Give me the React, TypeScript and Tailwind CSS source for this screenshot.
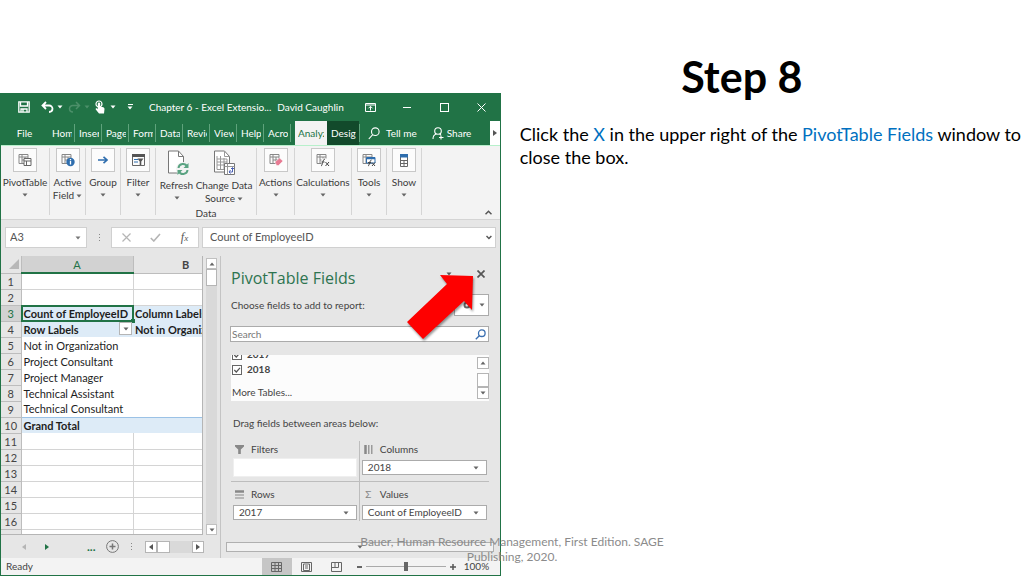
import type { ReactNode } from "react";

const tabs = ["Home", "Insert", "Page", "Formulas", "Data", "Review", "View", "Help", "Acrobat"];

const sheetRows = [
  { a: "", b: "" },
  { a: "", b: "" },
  { a: "Count of EmployeeID", b: "Column Labels", kind: "head" },
  { a: "Row Labels", b: "Not in Organization", kind: "head" },
  { a: "Not in Organization", b: "", kind: "body" },
  { a: "Project Consultant", b: "", kind: "body" },
  { a: "Project Manager", b: "", kind: "body" },
  { a: "Technical Assistant", b: "", kind: "body" },
  { a: "Technical Consultant", b: "", kind: "body" },
  { a: "Grand Total", b: "", kind: "head" },
  { a: "", b: "" },
  { a: "", b: "" },
  { a: "", b: "" },
  { a: "", b: "" },
  { a: "", b: "" },
  { a: "", b: "" },
  { a: "", b: "" },
];

function Caret({ className = "", up = false }: { className?: string; up?: boolean }) {
  return (
    <svg viewBox="0 0 6 4" className={`w-[6px] h-[4px] shrink-0 ${className}`} fill="currentColor">
      <path d={up ? "M.5 3.500h5L3 .5z" : "M.5.5h5L3 3.500z"} />
    </svg>
  );
}

function SideCaret({ left = false }: { left?: boolean }) {
  return (
    <svg viewBox="0 0 4 6" className="w-[4px] h-[6px]" fill="currentColor">
      <path d={left ? "M4 0v6L0 3z" : "M0 0v6l4-3z"} />
    </svg>
  );
}

/* Small pivot grid used by most ribbon icons */
function GridIcon({ children }: { children?: ReactNode }) {
  return (
    <svg viewBox="0 0 14 14" className="w-[14px] h-[14px]" fill="none">
      <path d="M1 1.500h9v9H1zM1 4h9M4 1.500v9M7 4v6.500M4 7h6" stroke="#888" strokeWidth="1" />
      {children}
    </svg>
  );
}

function RibbonGroup({ label, width, icon, second }: { label: string; width: string; icon: ReactNode; second?: string }) {
  return (
    <div className={`${width} shrink-0 h-[67px] border-r border-[#d5d5d5]`}>
      <button className="w-full flex flex-col items-center whitespace-nowrap text-[#3b3b3b]">
        <span className="w-[24px] h-[24px] bg-[#fcfcfc] border border-[#c8c8c8] flex items-center justify-center">
          {icon}
        </span>
        <span className="leading-[13px] mt-[4px]">{label}</span>
        {second ? (
          <span className="leading-[13px] flex items-center gap-[2px]">
            {second}
            <Caret className="text-[#666]" />
          </span>
        ) : (
          <Caret className="mt-[4px] text-[#666]" />
        )}
      </button>
    </div>
  );
}

function TitleBar() {
  return (
    <div className="h-[28px] flex items-center">
      <div className="flex items-center gap-[5px] pl-[17px]">
        <button aria-label="Save">
          <svg viewBox="0 0 12 12" className="w-[12px] h-[12px]" fill="none" stroke="#fff" strokeWidth="1.3">
            <path d="M.8.8h10.400v10.400H.8zM2.500.8v4.200h7V.8M3 11V8h6v3M5 8.500V11" />
          </svg>
        </button>
        <button aria-label="Undo" className="flex items-center gap-[3px] ml-[6px]">
          <svg viewBox="0 0 13 12" className="w-[13px] h-[12px]" fill="none" stroke="#fff" strokeWidth="1.8">
            <path d="M5 1L1.500 4.500 5 8M1.500 4.500H8a3.300 3.300 0 013.500 3.300c0 2-1.500 3.200-3.500 3.200" />
          </svg>
          <Caret />
        </button>
        <button aria-label="Redo" className="flex items-center gap-[3px] text-[#4c8f69]">
          <svg viewBox="0 0 13 12" className="w-[13px] h-[12px]" fill="none" stroke="currentColor" strokeWidth="1.5">
            <path d="M8 1l3.500 3.500L8 8M11.500 4.500H5A3.300 3.300 0 001.500 7.800C1.500 9.800 3 11 5 11" />
          </svg>
          <Caret />
        </button>
        <button aria-label="Touch mode" className="flex items-center gap-[5px]">
          <svg viewBox="0 0 10 14" className="w-[10px] h-[14px]" fill="none">
            <circle cx="4" cy="4" r="3" stroke="#fff" strokeWidth="1.200" />
            <path d="M2.800 3.500c0-1.500 2.400-1.500 2.400 0V6.500l3 .8c.9.300 1.300.9 1.300 1.700L9 13.500H4L.8 9.500c-.6-.9.500-1.700 1.300-1l.7.7z" fill="#fff" />
          </svg>
          <Caret />
        </button>
        <button aria-label="Customize toolbar" className="flex flex-col items-center gap-px ml-[6px]">
          <span className="w-[5px] h-px bg-white" />
          <Caret />
        </button>
      </div>
      <span className="ml-[16px] whitespace-nowrap">Chapter 6 - Excel Extensio...</span>
      <span className="flex-1 text-right whitespace-nowrap pr-[8px]">David Caughlin</span>
      <div className="flex shrink-0 text-white">
        <button aria-label="Ribbon display" className="w-[37px] flex justify-center">
          <svg viewBox="0 0 11 9" className="w-[11px] h-[9px]" fill="none" stroke="currentColor">
            <path d="M.5.5h10v8H.5zM.5 2h10M5.500 7.500v-4M3.500 5.300l2-2 2 2" />
          </svg>
        </button>
        <button aria-label="Minimize" className="w-[37px] flex items-center justify-center">
          <span className="w-[8px] h-px bg-white" />
        </button>
        <button aria-label="Maximize" className="w-[37px] flex justify-center">
          <span className="w-[9px] h-[9px] border border-white" />
        </button>
        <button aria-label="Close" className="w-[37px] flex justify-center">
          <svg viewBox="0 0 9 9" className="w-[9px] h-[9px]" stroke="currentColor">
            <path d="M.5.5l8 8M8.500.5l-8 8" />
          </svg>
        </button>
      </div>
    </div>
  );
}

function TabBar() {
  return (
    <div className="h-[24px] flex items-center">
      <button className="w-[47px] shrink-0">File</button>
      <div className="flex shrink-0">
        {tabs.map((tab) => (
          <button key={tab} className="w-[27px] h-[18px] pl-[4px] pr-[2px] border-r border-[#5fa37c] text-left">
            <span className="block overflow-hidden whitespace-nowrap">{tab}</span>
          </button>
        ))}
      </div>
      <button className="ml-[4px] w-[32px] shrink-0 h-full pl-[3px] pr-[3px] bg-[#f3f3f3] text-[#217346] text-left">
        <span className="block overflow-hidden whitespace-nowrap">Analyze</span>
      </button>
      <button className="w-[32px] shrink-0 h-full pl-[4px] pr-[3px] bg-[#124a2b] text-left">
        <span className="block overflow-hidden whitespace-nowrap">Design</span>
      </button>
      <span className="w-px h-[18px] bg-[#5fa37c]" />
      <button className="ml-[8px] flex items-center gap-[6px] whitespace-nowrap">
        <svg viewBox="0 0 12 13" className="w-[12px] h-[13px]" fill="none" stroke="#fff" strokeWidth="1.100">
          <circle cx="7.300" cy="4.700" r="3.800" />
          <path d="M4.700 7.600L.8 12" />
        </svg>
        Tell me
      </button>
      <button className="ml-[15px] flex items-center gap-[3px]">
        <svg viewBox="0 0 12 13" className="w-[12px] h-[13px]" fill="none" stroke="#fff" strokeWidth="1.100">
          <circle cx="6" cy="4" r="3.300" />
          <path d="M1 12c0-3 1.500-4.500 3.500-5M7.500 7l1.500 1M9 8.500v4M7 10.500h4.500" />
        </svg>
        Share
      </button>
      <button aria-label="More tabs" className="ml-auto w-[10px] h-full bg-white text-[#555] flex items-center justify-center">
        <SideCaret />
      </button>
    </div>
  );
}

function Ribbon() {
  return (
    <div className="h-[75px] pt-[2px] bg-[#f3f3f3] border-t border-[#b7f0cb] border-b border-b-[#d4d4d4] flex">
      <RibbonGroup
        label="PivotTable"
        width="w-[49px]"
        icon={
          <GridIcon>
            <path d="M6 5.500h7v7H6zM6 8h7M8.500 8v4.500" stroke="#666" fill="#fff" />
          </GridIcon>
        }
      />
      <RibbonGroup
        label="Active"
        second="Field"
        width="w-[36px]"
        icon={
          <GridIcon>
            <circle cx="9.500" cy="9" r="4.200" fill="#2f6eae" />
            <path d="M9.500 8v3.500M9.500 6v1.200" stroke="#fff" strokeWidth="1.300" />
          </GridIcon>
        }
      />
      <RibbonGroup
        label="Group"
        width="w-[35px]"
        icon={
          <svg viewBox="0 0 10 8" className="w-[10px] h-[8px]" fill="none" stroke="#2f6eae" strokeWidth="1.600">
            <path d="M0 4h9M5.500.8L9 4 5.500 7.200" />
          </svg>
        }
      />
      <RibbonGroup
        label="Filter"
        width="w-[35px]"
        icon={
          <svg viewBox="0 0 13 12" className="w-[13px] h-[12px]" fill="none">
            <path d="M.5.5h12v11H.5z" stroke="#666" />
            <path d="M0 0h13v3H0z" fill="#555" />
            <path d="M2 5.500h4M2 8h4" stroke="#2f6eae" strokeWidth="1.200" />
            <path d="M5.500 4.500h6L9.300 7.500v3.500H7.700V7.500z" fill="#555" />
          </svg>
        }
      />
      <div className="w-[101px] shrink-0 h-[67px] border-r border-[#d5d5d5] text-[#3b3b3b]">
        <div className="flex pl-[3px] whitespace-nowrap">
          <button className="w-[35px] flex flex-col items-center">
            <svg viewBox="0 0 24 26" className="w-[24px] h-[26px] mt-[2px]" fill="none">
              <path d="M3.500 1h10l5 5.500V23h-15z" fill="#fff" stroke="#777" />
              <path d="M13.500 1v5.500h5" stroke="#777" />
              <circle cx="18" cy="19" r="7" fill="#f3f3f3" />
              <path d="M13.500 18c.5-5 7-5 8.500-1.500M22.500 20c-.5 5-7 5-8.500 1.500" stroke="#5aa382" strokeWidth="2" />
              <path d="M23.500 13v5h-5zM12.500 25v-5h5z" fill="#5aa382" />
            </svg>
            <span className="leading-[13px] mt-[3px]">Refresh</span>
            <Caret className="mt-[4px] text-[#666]" />
          </button>
          <button className="w-[60px] flex flex-col items-center">
            <svg viewBox="0 0 24 26" className="w-[24px] h-[26px] mt-[2px]" fill="none">
              <path d="M2.500 1h10l5 5.500V22h-15z" fill="#fff" stroke="#777" />
              <path d="M12.500 1v5.500h5M5 6v13.500h10V9M5 9h10M5 12h10M5 15h10M8.500 6v13.500M12 8v11" stroke="#999" />
              <path d="M12.500 13.500h10v11h-10z" fill="#fff" stroke="#777" />
              <path d="M12.500 16.500h10M15.500 13.500v11" stroke="#999" />
              <path d="M17 22h3.500v-4M18.500 20L17 22l1.500 1.500M19 19l1.500-1.500L22 19" stroke="#4a61b5" />
            </svg>
            <span className="leading-[13px] mt-[3px]">Change Data</span>
            <span className="leading-[13px] flex items-center gap-[2px]">
              Source
              <Caret className="text-[#666]" />
            </span>
          </button>
        </div>
        <div className="text-center leading-[14px] mt-px">Data</div>
      </div>
      <RibbonGroup
        label="Actions"
        width="w-[38px]"
        icon={
          <GridIcon>
            <path d="M6 9l4.500-4L14 8l-4.500 4.500H7.500z" fill="#e77b93" stroke="#fff" strokeWidth=".5" />
          </GridIcon>
        }
      />
      <RibbonGroup
        label="Calculations"
        width="w-[57px]"
        icon={
          <GridIcon>
            <path d="M5.500 5.500H14V14H5.500z" fill="#fcfcfc" />
            <path d="M5 13c1.500 0 1.500-7 4-7M5.500 9h3M9.500 9l3.500 4M13 9l-3.500 4" stroke="#444" />
          </GridIcon>
        }
      />
      <RibbonGroup
        label="Tools"
        width="w-[35px]"
        icon={
          <GridIcon>
            <path d="M4.500 4.500H13V10H4.500z" fill="#fff" stroke="#2f6eae" />
            <path d="M4.500 5.500H13" stroke="#2f6eae" strokeWidth="1.500" />
            <path d="M6 13c1.500 0 1.500-6 3.500-6M6 9.500h3M10 9.500l3 3.500M13 9.500L10 13" stroke="#444" />
          </GridIcon>
        }
      />
      <RibbonGroup
        label="Show"
        width="w-[35px]"
        icon={
          <svg viewBox="0 0 8 13" className="w-[8px] h-[13px]" fill="none">
            <path d="M.5.5h7v12h-7z" fill="#fff" stroke="#666" />
            <path d="M0 0h8v3.500H0z" fill="#2f6eae" />
            <path d="M0 6.500h8M0 9.500h8M4 6.500v6" stroke="#666" />
          </svg>
        }
      />
      <button aria-label="Collapse ribbon" className="ml-auto self-end mb-[4px] mr-[8px] text-[#555]">
        <svg viewBox="0 0 7 5" className="w-[7px] h-[5px]" fill="none" stroke="currentColor" strokeWidth="1.500">
          <path d="M.5 4.200l3-3 3 3" />
        </svg>
      </button>
    </div>
  );
}

function FormulaBar() {
  return (
    <div className="h-[36px] pt-[7px] px-[4px] flex items-start text-[11px] text-[#555]">
      <div className="w-[82px] h-[21px] bg-white border border-[#d0d0d0] flex items-center pl-[4px] pr-[5px]">
        <input aria-label="Name box" defaultValue="A3" className="w-full min-w-0 bg-transparent outline-none" />
        <Caret className="text-[#777]" />
      </div>
      <span className="w-[24px] h-[21px] flex flex-col items-center justify-center gap-[2px]">
        <i className="w-px h-px bg-[#888]" />
        <i className="w-px h-px bg-[#888]" />
        <i className="w-px h-px bg-[#888]" />
      </span>
      <div className="w-[88px] h-[21px] bg-white border border-[#d0d0d0] flex items-center justify-around">
        <button aria-label="Cancel">
          <svg viewBox="0 0 9 9" className="w-[9px] h-[9px]" stroke="#b5b5b5" strokeWidth="1.200">
            <path d="M.5.5l8 8M8.500.5l-8 8" />
          </svg>
        </button>
        <button aria-label="Enter">
          <svg viewBox="0 0 11 9" className="w-[11px] h-[9px]" fill="none" stroke="#b5b5b5" strokeWidth="1.600">
            <path d="M.8 5l3 3L10 1" />
          </svg>
        </button>
        <button aria-label="Insert function" className="font-['Liberation_Serif',serif] italic leading-[12px] text-[12px]">
          f<span className="text-[9px]">x</span>
        </button>
      </div>
      <div className="ml-[3px] flex-1 h-[21px] bg-white border border-[#d0d0d0] flex items-center pl-[7px] pr-[3px]">
        <input aria-label="Formula" defaultValue="Count of EmployeeID" className="w-full min-w-0 bg-transparent outline-none" />
        <svg viewBox="0 0 6 5" className="w-[6px] h-[5px]" fill="none" stroke="#555" strokeWidth="1.500">
          <path d="M.5 1l2.500 2.500L5.500 1" />
        </svg>
      </div>
    </div>
  );
}

function Sheet() {
  return (
    <div className="flex w-[220px] shrink-0 border-r border-[#c4c4c4]">
      <div className="w-[202px] overflow-hidden border-r border-b border-[#b5b5b5]">
        <table className="w-[202px] table-fixed border-collapse font-['Lato',sans-serif] text-[11px] leading-[15px]">
          <colgroup>
            <col className="w-[20px]" />
            <col className="w-[112px]" />
            <col />
          </colgroup>
          <thead>
            <tr className="h-[17px] text-[#444]">
              <th className="p-0 border-r border-b border-[#bdbdbd]">
                <svg viewBox="0 0 10 10" className="w-[10px] h-[10px] ml-auto mr-[2px]" fill="#b8b8b8">
                  <path d="M10 0v10H0z" />
                </svg>
              </th>
              <th className="p-0 font-normal bg-[#d2d2d2] text-[#217346] border-r border-r-[#bdbdbd] border-b-2 border-b-[#217346]">A</th>
              <th className="p-0 pl-[35px] font-bold border-b border-[#bdbdbd]">B</th>
            </tr>
          </thead>
          <tbody>
            {sheetRows.map((row, i) => {
              const head = row.kind === "head";
              const line = row.kind ? "" : "border-r border-b border-[#d4d4d4]";
              return (
                <tr key={i} className={head ? "h-[16px] bg-[#ddebf7] font-bold" : "h-[16px] bg-white"}>
                  <th
                    scope="row"
                    className={`p-0 font-normal border-r border-b border-[#bdbdbd] ${i === 2 ? "bg-[#d2d2d2] text-[#217346]" : "bg-[#e6e6e6] text-[#444]"}`}
                  >
                    {i + 1}
                  </th>
                  <td
                    className={`p-0 pl-[2px] relative whitespace-nowrap text-[#1d1d1d] ${line} ${i === 9 ? "border-t border-[#9bc2e6]" : ""}`}
                  >
                    {row.a}
                    {i === 2 && (
                      <span className="absolute -inset-px border-2 border-[#217346]">
                        <span className="absolute -right-[3px] -bottom-[3px] w-[4px] h-[4px] bg-[#217346]" />
                      </span>
                    )}
                    {i === 3 && (
                      <button aria-label="Filter rows" className="absolute right-px top-px w-[13px] h-[13px] bg-white border border-[#b5b5b5] flex items-center justify-center">
                        <Caret className="text-[#666]" />
                      </button>
                    )}
                  </td>
                  <td className={`p-0 pl-[2px] whitespace-nowrap overflow-hidden text-[#1d1d1d] ${line} ${i === 9 ? "border-t border-[#9bc2e6]" : ""}`}>
                    {row.b}
                  </td>
                </tr>
              );
            })}
          </tbody>
        </table>
      </div>
      <div className="ml-[3px] mt-[2px] w-[11px] bg-[#d9d9d9] flex flex-col text-[#666]">
        <button aria-label="Scroll up" className="h-[11px] bg-white border border-[#c0c0c0] flex items-center justify-center">
          <Caret up />
        </button>
        <span className="h-[17px] bg-white border border-[#b5b5b5]" />
        <button aria-label="Scroll down" className="mt-auto h-[11px] bg-white border border-[#c0c0c0] flex items-center justify-center">
          <Caret />
        </button>
      </div>
    </div>
  );
}

function FieldArea({ title, icon, value }: { title: string; icon: ReactNode; value?: string }) {
  return (
    <div className="px-[2px]">
      <div className="h-[16px] flex items-center gap-[7px] pl-[2px]">
        <span className="w-[9px] flex justify-center text-[#888]">{icon}</span>
        {title}
      </div>
      {value ? (
        <button className="mt-[3px] w-full h-[15px] bg-white border border-[#ababab] flex items-center justify-between pl-[5px] pr-[7px] text-[#444]">
          {value}
          <Caret className="text-[#666]" />
        </button>
      ) : (
        <div className="mt-px h-[19px] bg-white border border-[#efefef]" />
      )}
    </div>
  );
}

function FieldsPane() {
  return (
    <section className="flex-1 min-w-0 pt-[11px] pl-[10px] pr-[11px] text-[#444] relative">
      <div className="flex justify-between items-start">
        <h2 className="font-['Open_Sans',sans-serif] text-[16px] leading-[22px] text-[#2e7450]">PivotTable Fields</h2>
        <div className="flex items-center gap-[25px] pr-[4px] pt-[3px]">
          <Caret className="text-[#555]" />
          <button aria-label="Close pane">
            <svg viewBox="0 0 8 8" className="w-[8px] h-[8px]" stroke="#555" strokeWidth="1.700">
              <path d="M.5.5l7 7M7.500.5l-7 7" />
            </svg>
          </button>
        </div>
      </div>
      <div className="mt-[5px] flex justify-between items-center h-[22px]">
        <span>Choose fields to add to report:</span>
        <button aria-label="Tools" className="w-[35px] h-[22px] bg-white border border-[#ababab] flex items-center justify-between pl-[8px] pr-[3px] text-[#666]">
          <svg viewBox="0 0 8 8" className="w-[8px] h-[8px]" fill="none" stroke="currentColor" strokeWidth="2">
            <circle cx="4" cy="4" r="2.500" />
          </svg>
          <Caret />
        </button>
      </div>
      <div className="mt-[10px] -ml-px h-[16px] bg-white border border-[#ababab] flex items-center pr-[2px]">
        <input aria-label="Search" placeholder="Search" className="flex-1 min-w-0 pl-px outline-none placeholder:text-[#777]" />
        <svg viewBox="0 0 11 11" className="w-[11px] h-[11px]" fill="none" stroke="#3a6fb0" strokeWidth="1.300">
          <circle cx="6.800" cy="4.200" r="3.300" />
          <path d="M4.300 6.700L.8 10.200" />
        </svg>
      </div>
      <div className="mt-[13px] h-[46px] bg-[#fcfcfc] overflow-hidden flex justify-between">
        <div className="-mt-[8px] font-bold">
          {["2017", "2018"].map((year) => (
            <label key={year} className="h-[15px] flex items-center gap-[5px] pl-px">
              <span className="relative flex">
                <input type="checkbox" defaultChecked className="appearance-none w-[10px] h-[10px] bg-white border border-[#666]" />
                <svg viewBox="0 0 10 10" className="absolute inset-0 w-[10px] h-[10px]" fill="none" stroke="#555" strokeWidth="1.200">
                  <path d="M2.300 5l2 2L8 2.800" />
                </svg>
              </span>
              {year}
            </label>
          ))}
          <a href="#more" className="block mt-[8px] pl-px leading-[14px] font-normal">More Tables...</a>
        </div>
        <div className="w-[12px] mt-[2px] mb-[2px] flex flex-col justify-between text-[#666]">
          <button aria-label="Scroll up" className="h-[12px] bg-white border border-[#b5b5b5] flex items-center justify-center">
            <Caret up />
          </button>
          <div>
            <span className="block h-[14px] bg-white border border-[#b5b5b5]" />
            <button aria-label="Scroll down" className="w-full h-[12px] bg-white border border-[#b5b5b5] flex items-center justify-center">
              <Caret />
            </button>
          </div>
        </div>
      </div>
      <div className="mt-[15px] pl-[2px] leading-[14px]">Drag fields between areas below:</div>
      <div className="mt-[11px] grid grid-cols-2">
        <div className="h-[41px] border-r border-b border-[#bdbdbd]">
          <FieldArea
            title="Filters"
            icon={
              <svg viewBox="0 0 9 9" className="w-[9px] h-[9px]" fill="currentColor">
                <path d="M0 0h9v1.500L5.800 4.500V9H3.200V4.500L0 1.500z" />
              </svg>
            }
          />
        </div>
        <div className="h-[41px] border-b border-[#bdbdbd]">
          <FieldArea
            title="Columns"
            value="2018"
            icon={
              <svg viewBox="0 0 9 9" className="w-[9px] h-[9px]" stroke="currentColor">
                <path d="M1.500 0v9" strokeWidth="2.500" />
                <path d="M4.800 0v9M7.800 0v9" strokeWidth="1.200" />
              </svg>
            }
          />
        </div>
        <div className="h-[39px] pt-[4px] border-r border-[#bdbdbd]">
          <FieldArea
            title="Rows"
            value="2017"
            icon={
              <svg viewBox="0 0 9 9" className="w-[9px] h-[9px]" stroke="currentColor">
                <path d="M0 1.500h9" strokeWidth="2.500" />
                <path d="M0 5h9M0 8h9" strokeWidth="1.200" />
              </svg>
            }
          />
        </div>
        <div className="h-[39px] pt-[4px]">
          <FieldArea title="Values" value="Count of EmployeeID" icon={<span>Σ</span>} />
        </div>
      </div>

      {/* Callout arrow pointing at the close button */}
      <svg viewBox="0 0 70 70" className="absolute right-[26px] top-[16px] w-[70px] h-[70px] drop-shadow-[1px_2px_1px_rgba(0,0,0,0.4)]">
        <path d="M69 4L36 3l7 9L3 50l16 17 41-38 8 9z" fill="#fe0000" />
      </svg>
    </section>
  );
}

function SheetTabs() {
  return (
    <div className="h-[23px] flex">
      <div className="w-[220px] shrink-0 flex items-center border-r border-[#c4c4c4]">
        <button aria-label="Previous sheet" className="ml-[21px] text-[#b5b5b5]"><SideCaret left /></button>
        <button aria-label="Next sheet" className="ml-[19px] text-[#217346]"><SideCaret /></button>
        <span className="ml-[38px] text-[12px] leading-[12px] font-bold text-[#217346]">...</span>
        <button aria-label="New sheet" className="ml-[10px]">
          <svg viewBox="0 0 13 13" className="w-[13px] h-[13px]" fill="none" stroke="#777">
            <circle cx="6.500" cy="6.500" r="5.900" />
            <path d="M6.500 3.500v6M3.500 6.500h6" strokeWidth="1.500" />
          </svg>
        </button>
        <span className="ml-[12px] flex flex-col gap-[2px]">
          <i className="w-px h-px bg-[#888]" />
          <i className="w-px h-px bg-[#888]" />
          <i className="w-px h-px bg-[#888]" />
        </span>
        <div className="ml-[13px] w-[59px] h-[12px] bg-[#d9d9d9] flex text-[#555]">
          <button aria-label="Scroll left" className="w-[12px] bg-white border border-[#b5b5b5] flex items-center justify-center">
            <SideCaret left />
          </button>
          <span className="w-[13px] bg-white border border-[#b5b5b5]" />
          <button aria-label="Scroll right" className="ml-auto w-[12px] bg-white border border-[#b5b5b5] flex items-center justify-center">
            <SideCaret />
          </button>
        </div>
      </div>
      <div className="flex-1 pl-[5px] pr-[6px] pt-[7px]">
        <div className="h-[10px] bg-[#f1f1f1] border border-[#b0b0b0] flex items-center justify-center">
          <Caret className="text-[#666]" />
        </div>
      </div>
    </div>
  );
}

function StatusBar() {
  return (
    <div className="h-[17px] bg-[#f3f3f3] flex items-center text-[#444]">
      <span className="pl-[5px]">Ready</span>
      <div className="ml-auto flex items-center h-full">
        <button aria-label="Normal view" className="w-[30px] h-full bg-[#c6c6c6] flex items-center justify-center">
          <svg viewBox="0 0 11 10" className="w-[11px] h-[10px]" fill="none" stroke="#666">
            <path d="M.5.5h10v9H.5zM.5 3.500h10M.5 6.500h10M4 .5v9M7.500.5v9" />
          </svg>
        </button>
        <button aria-label="Page layout" className="w-[30px] flex justify-center">
          <svg viewBox="0 0 11 10" className="w-[11px] h-[10px]" fill="none" stroke="#666">
            <path d="M.5.5h10v9H.5zM2.500 2v6.500h6V2zM4 4h3M4 6h3" />
          </svg>
        </button>
        <button aria-label="Page break preview" className="w-[30px] flex justify-center">
          <svg viewBox="0 0 11 10" className="w-[11px] h-[10px]" fill="none" stroke="#666">
            <path d="M.5 9.500V.5h10v9zM4 .5v5M7.500.5v5M.5 5.500h7" />
          </svg>
        </button>
        <button aria-label="Zoom out" className="ml-[5px] w-[5px] h-[2px] bg-[#666]" />
        <input
          type="range"
          aria-label="Zoom"
          className="mx-[4px] w-[80px] h-[10px] appearance-none bg-[linear-gradient(#aaa,#aaa)] bg-[length:100%_1px] bg-center bg-no-repeat [&::-webkit-slider-thumb]:appearance-none [&::-webkit-slider-thumb]:w-[4px] [&::-webkit-slider-thumb]:h-[9px] [&::-webkit-slider-thumb]:bg-[#666]"
        />
        <button aria-label="Zoom in">
          <svg viewBox="0 0 6 6" className="w-[6px] h-[6px]" stroke="#555" strokeWidth="1.500">
            <path d="M0 3h6M3 0v6" />
          </svg>
        </button>
        <span className="w-[44px] pl-[8px]">100%</span>
      </div>
    </div>
  );
}

export default function App() {
  return (
    <main className="relative h-screen min-h-[576px] bg-white flex font-['Lato',sans-serif]">
      {/* Excel window */}
      <div className="w-[48.9%] shrink-0 pt-[93px] flex flex-col text-[10px]">
        <div className="flex-1 min-h-0 flex flex-col border-x border-b border-[#217346] bg-[#e6e6e6] overflow-hidden">
          <header className="bg-[#217346] text-white">
            <TitleBar />
            <TabBar />
          </header>
          <Ribbon />
          <FormulaBar />
          <div className="flex-1 min-h-0 flex">
            <Sheet />
            <FieldsPane />
          </div>
          <SheetTabs />
          <StatusBar />
        </div>
      </div>

      {/* Instructions */}
      <article className="flex-1 min-w-0 pl-[19px] pt-[49px] text-black">
        <h1 className="text-center text-[43px] leading-[56px] font-bold pr-[60px]">Step 8</h1>
        <p className="mt-[18px] text-[18px] leading-[23px]">
          Click the <span className="text-[#0070c0]">X</span> in the upper right of the{" "}
          <span className="text-[#0070c0]">PivotTable Fields</span> window to close the box.
        </p>
      </article>

      <footer className="absolute inset-x-0 bottom-[12px] flex justify-center">
        <p className="w-[320px] text-center text-[12px] leading-[15px] text-[#8b8b8b]">
          Bauer, Human Resource Management, First Edition. SAGE Publishing, 2020.
        </p>
      </footer>
    </main>
  );
}
